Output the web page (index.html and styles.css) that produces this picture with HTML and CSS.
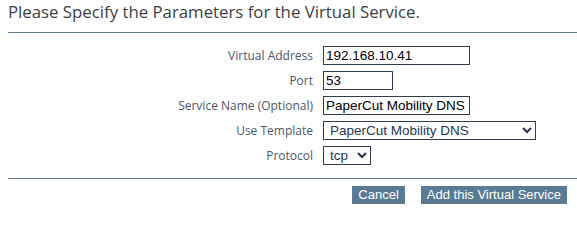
FILE: index.html
```html
<!DOCTYPE html>
<html>
<head>
<meta charset="utf-8">
<link rel="stylesheet" href="styles.css">
</head>
<body>
<div class="page">
  <h1 class="title">Please Specify the Parameters for the Virtual Service.</h1>
  <form class="form">
    <div class="grid">
      <label class="lbl" for="va">Virtual Address</label>
      <div class="field"><input id="va" class="inp w-addr" type="text" value="192.168.10.41"></div>
      <label class="lbl" for="port">Port</label>
      <div class="field"><input id="port" class="inp w-port" type="text" value="53"></div>
      <label class="lbl" for="sn">Service Name (Optional)</label>
      <div class="field"><input id="sn" class="inp w-addr" type="text" value="PaperCut Mobility DNS"></div>
      <label class="lbl" for="tpl">Use Template</label>
      <div class="field"><select id="tpl" class="sel w-tpl"><option>PaperCut Mobility DNS</option></select></div>
      <label class="lbl" for="proto">Protocol</label>
      <div class="field"><select id="proto" class="sel w-proto"><option>tcp</option></select></div>
    </div>
    <div class="actions">
      <button type="button" class="btn">Cancel</button>
      <button type="button" class="btn">Add this Virtual Service</button>
    </div>
  </form>
</div>
</body>
</html>
```

FILE: styles.css
```css
html, body {
  margin: 0;
  padding: 0;
  background: #ffffff;
}
.page {
  padding: 0 0 0 8px;
  font-family: "Open Sans", "Noto Sans", sans-serif;
}
.title {
  margin: 0;
  padding: 2px 0 10px 0;
  font-size: 16.8px;
  font-weight: normal;
  color: #3a3f45;
  line-height: 20px;
  border-bottom: 1px solid #5a7895;
}
.form {
  margin: 0;
}
.grid {
  display: grid;
  grid-template-columns: 305px auto;
  column-gap: 10px;
  row-gap: 6px;
  padding: 13px 0 13px 0;
  border-bottom: 1px solid #5a7895;
  align-items: center;
}
.lbl {
  text-align: right;
  font-size: 12px;
  color: #4b5668;
  line-height: 19px;
}
.field {
  display: flex;
  align-items: center;
}
.inp {
  box-sizing: border-box;
  height: 19px;
  margin: 0;
  padding: 0 0 0 2px;
  border: 1px solid #2e3d4f;
  border-radius: 0;
  font-family: Arial, "Liberation Sans", sans-serif;
  font-size: 13.5px;
  color: #000;
  background: #fff;
  outline: none;
}
.sel {
  box-sizing: border-box;
  height: 19px;
  margin: 0;
  padding: 0 0 0 2px;
  border: 1px solid #2e3d4f;
  border-radius: 0;
  font-family: Arial, "Liberation Sans", sans-serif;
  font-size: 13.5px;
  color: #243652;
  background-color: #fff;
}
.w-addr { width: 147px; }
.w-port { width: 70px; }
.w-tpl { width: 213px; }
.w-proto { width: 48px; }
.actions {
  display: flex;
  justify-content: flex-end;
  gap: 16px;
  padding: 7px 10px 0 0;
}
.btn {
  margin: 0;
  height: 18px;
  padding: 0 6px;
  border: none;
  border-radius: 0;
  background: #5b7a94;
  color: #ffffff;
  font-family: Arial, "Liberation Sans", sans-serif;
  font-size: 13px;
  line-height: 18px;
}
```
